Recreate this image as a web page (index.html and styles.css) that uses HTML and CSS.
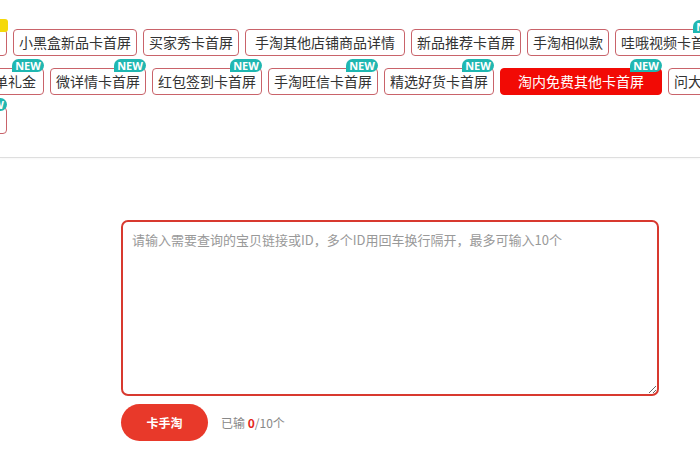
FILE: index.html
```html
<!DOCTYPE html>
<html lang="zh-CN">
<head>
<meta charset="utf-8">
<title>卡首屏</title>
<link rel="stylesheet" href="styles.css">
</head>
<body>
<div class="page">
  <div class="tags">
    <div class="row row-1">
      <span class="tag tag-cut-a">手淘首页<i class="badge badge-hot"></i></span>
      <span class="tag">小黑盒新品卡首屏</span>
      <span class="tag">买家秀卡首屏</span>
      <span class="tag tag-wide">手淘其他店铺商品详情</span>
      <span class="tag">新品推荐卡首屏</span>
      <span class="tag">手淘相似款</span>
      <span class="tag">哇哦视频卡首屏<i class="badge">NEW</i></span>
    </div>
    <div class="row row-2">
      <span class="tag tag-cut-b">新人首单礼金<i class="badge">NEW</i></span>
      <span class="tag">微详情卡首屏<i class="badge">NEW</i></span>
      <span class="tag">红包签到卡首屏<i class="badge">NEW</i></span>
      <span class="tag">手淘旺信卡首屏<i class="badge">NEW</i></span>
      <span class="tag">精选好货卡首屏<i class="badge">NEW</i></span>
      <span class="tag tag-active">淘内免费其他卡首屏<i class="badge">NEW</i></span>
      <span class="tag">问大家卡首屏</span>
    </div>
    <div class="row row-3">
      <span class="tag tag-cut-a">猜你喜欢<i class="badge">NEW</i></span>
    </div>
  </div>
  <div class="divider"></div>
  <div class="form">
    <textarea class="input" placeholder="请输入需要查询的宝贝链接或ID，多个ID用回车换行隔开，最多可输入10个"></textarea>
    <div class="actions">
      <button class="btn">卡手淘</button>
      <span class="count">已输 <b>0</b>/10个</span>
    </div>
  </div>
</div>
</body>
</html>
```

FILE: styles.css
```css
html, body {
  margin: 0;
  padding: 0;
  background: #fff;
  overflow: hidden;
}
body {
  font-family: "Microsoft YaHei", "Noto Sans CJK SC", "Noto Sans", sans-serif;
  color: #333;
}
.page {
  width: 700px;
  height: 470px;
  overflow: hidden;
}
.tags {
  padding-top: 29px;
  display: flex;
  flex-direction: column;
  gap: 12px;
}
.row {
  display: flex;
  gap: 6px;
  white-space: nowrap;
}
.row-1 { margin-left: -73px; }
.row-2 { margin-left: -54px; }
.row-3 { margin-left: -73px; }
.tag {
  position: relative;
  flex: none;
  box-sizing: border-box;
  height: 27px;
  line-height: 25px;
  padding: 0 5px;
  border: 1px solid #c9636a;
  border-radius: 4px;
  font-size: 14px;
  color: #333;
  background: #fff;
}
.tag-wide {
  padding: 0 9px;
}
.tag-cut-a {
  width: 80px;
  overflow: visible;
  color: transparent;
}
.tag-cut-b {
  width: 98px;
  text-align: right;
  padding-right: 7px;
}
.tag-active {
  background: #f20a05;
  border-color: #f20a05;
  color: #fff;
  padding: 0 17px;
}
.badge {
  position: absolute;
  top: -10px;
  right: -1px;
  width: 32px;
  height: 13px;
  line-height: 13px;
  border-radius: 7px 7px 7px 0;
  background: #1fb7b1;
  color: #fff;
  font-style: normal;
  font-weight: bold;
  font-size: 11px;
  font-family: "Open Sans", "Liberation Sans", sans-serif;
  text-align: center;
}
.badge-hot {
  background: #f5d90a;
  width: 12px;
  right: -2px;
  top: -11px;
  border-radius: 3px;
}
.divider {
  margin-top: 23px;
  height: 0;
  border-top: 1px solid #dedede;
  box-shadow: 0 1px 2px rgba(0, 0, 0, 0.05);
}
.form {
  margin: 62px 0 0 121px;
  width: 538px;
}
.input {
  display: block;
  box-sizing: border-box;
  width: 538px;
  height: 176px;
  margin: 0;
  padding: 8px 9px;
  border: 2px solid #d8392f;
  border-radius: 7px;
  font-family: "Microsoft YaHei", "Noto Sans CJK SC", sans-serif;
  font-size: 13px;
  line-height: 20px;
  color: #333;
  outline: none;
}
.input::placeholder {
  color: #999;
}
.actions {
  margin-top: 8px;
  display: flex;
  align-items: center;
  gap: 13px;
}
.btn {
  width: 87px;
  height: 37px;
  border: none;
  border-radius: 19px;
  background: #e8392a;
  color: #fff;
  font-family: "Microsoft YaHei", "Noto Sans CJK SC", sans-serif;
  font-size: 12px;
  font-weight: bold;
  padding: 0;
}
.count {
  font-size: 12px;
  color: #888;
}
.count b {
  color: #e3261c;
}
```
